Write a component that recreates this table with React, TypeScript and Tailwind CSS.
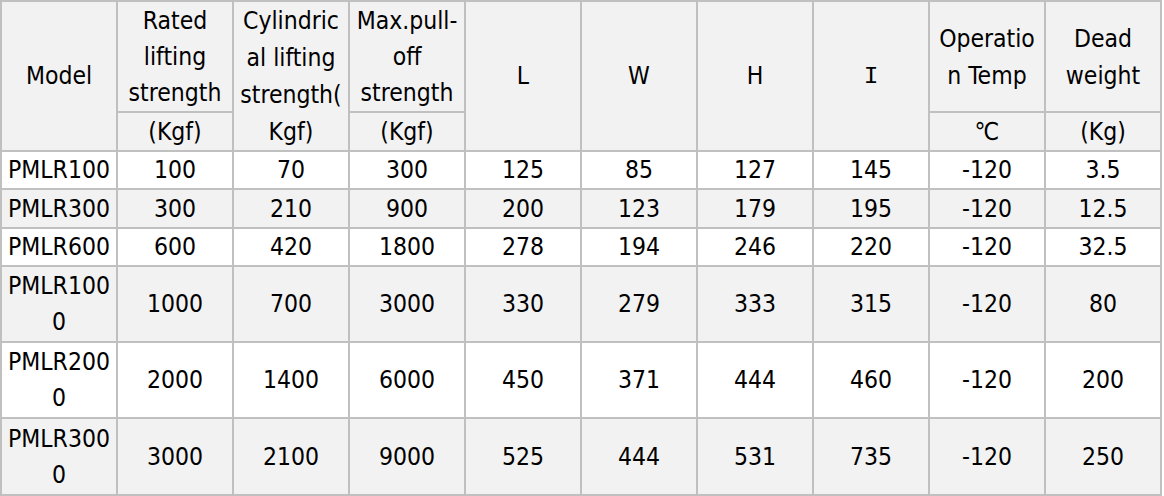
import React from "react";

const rows: { model: React.ReactNode; vals: string[]; h: string }[] = [
  { model: "PMLR100", vals: ["100", "70", "300", "125", "85", "127", "145", "-120", "3.5"], h: "h-[38px]" },
  { model: "PMLR300", vals: ["300", "210", "900", "200", "123", "179", "195", "-120", "12.5"], h: "h-[39px]" },
  { model: "PMLR600", vals: ["600", "420", "1800", "278", "194", "246", "220", "-120", "32.5"], h: "h-[38px]" },
  { model: <>PMLR100<br />0</>, vals: ["1000", "700", "3000", "330", "279", "333", "315", "-120", "80"], h: "h-[76px]" },
  { model: <>PMLR200<br />0</>, vals: ["2000", "1400", "6000", "450", "371", "444", "460", "-120", "200"], h: "h-[76px]" },
  { model: <>PMLR300<br />0</>, vals: ["3000", "2100", "9000", "525", "444", "531", "735", "-120", "250"], h: "h-[77px]" },
];

const cell = "border-2 border-[#c0c0c0] p-0 text-center align-middle whitespace-nowrap leading-[36px]";
const head = cell + " bg-[#f2f2f2] font-normal";

export default function App() {
  return (
    <div className="w-[1164px] h-[496px] overflow-hidden bg-white text-black font-['DejaVu_Sans_Condensed','DejaVu_Sans',sans-serif] text-[24.5px]">
      <table className="table-fixed border-collapse w-[1162px]">
        <colgroup>
          {Array.from({ length: 10 }).map((_, i) => (
            <col key={i} className="w-[116px]" />
          ))}
        </colgroup>
        <thead>
          <tr className="h-[110px]">
            <th rowSpan={2} className={head}>Model</th>
            <th className={head}>Rated<br />lifting<br />strength</th>
            <th rowSpan={2} className={head + " leading-[37px]"}>Cylindric<br />al lifting<br />strength(<br />Kgf)</th>
            <th className={head}>Max.pull-<br />off<br />strength</th>
            <th rowSpan={2} className={head}>L</th>
            <th rowSpan={2} className={head}>W</th>
            <th rowSpan={2} className={head}>H</th>
            <th rowSpan={2} className={head}><span className="font-['Liberation_Mono',monospace]">I</span></th>
            <th className={head + " leading-[37px]"}>Operatio<br />n Temp</th>
            <th className={head + " leading-[37px]"}>Dead<br />weight</th>
          </tr>
          <tr className="h-[38px]">
            <th className={head}>(Kgf)</th>
            <th className={head}>(Kgf)</th>
            <th className={head}>℃</th>
            <th className={head}>(Kg)</th>
          </tr>
        </thead>
        <tbody>
          {rows.map((r, i) => (
            <tr key={i} className={r.h + (i % 2 === 1 ? " bg-[#f2f2f2]" : " bg-white")}>
              <td className={cell}>{r.model}</td>
              {r.vals.map((v, j) => (
                <td key={j} className={cell}>{v}</td>
              ))}
            </tr>
          ))}
        </tbody>
      </table>
    </div>
  );
}
